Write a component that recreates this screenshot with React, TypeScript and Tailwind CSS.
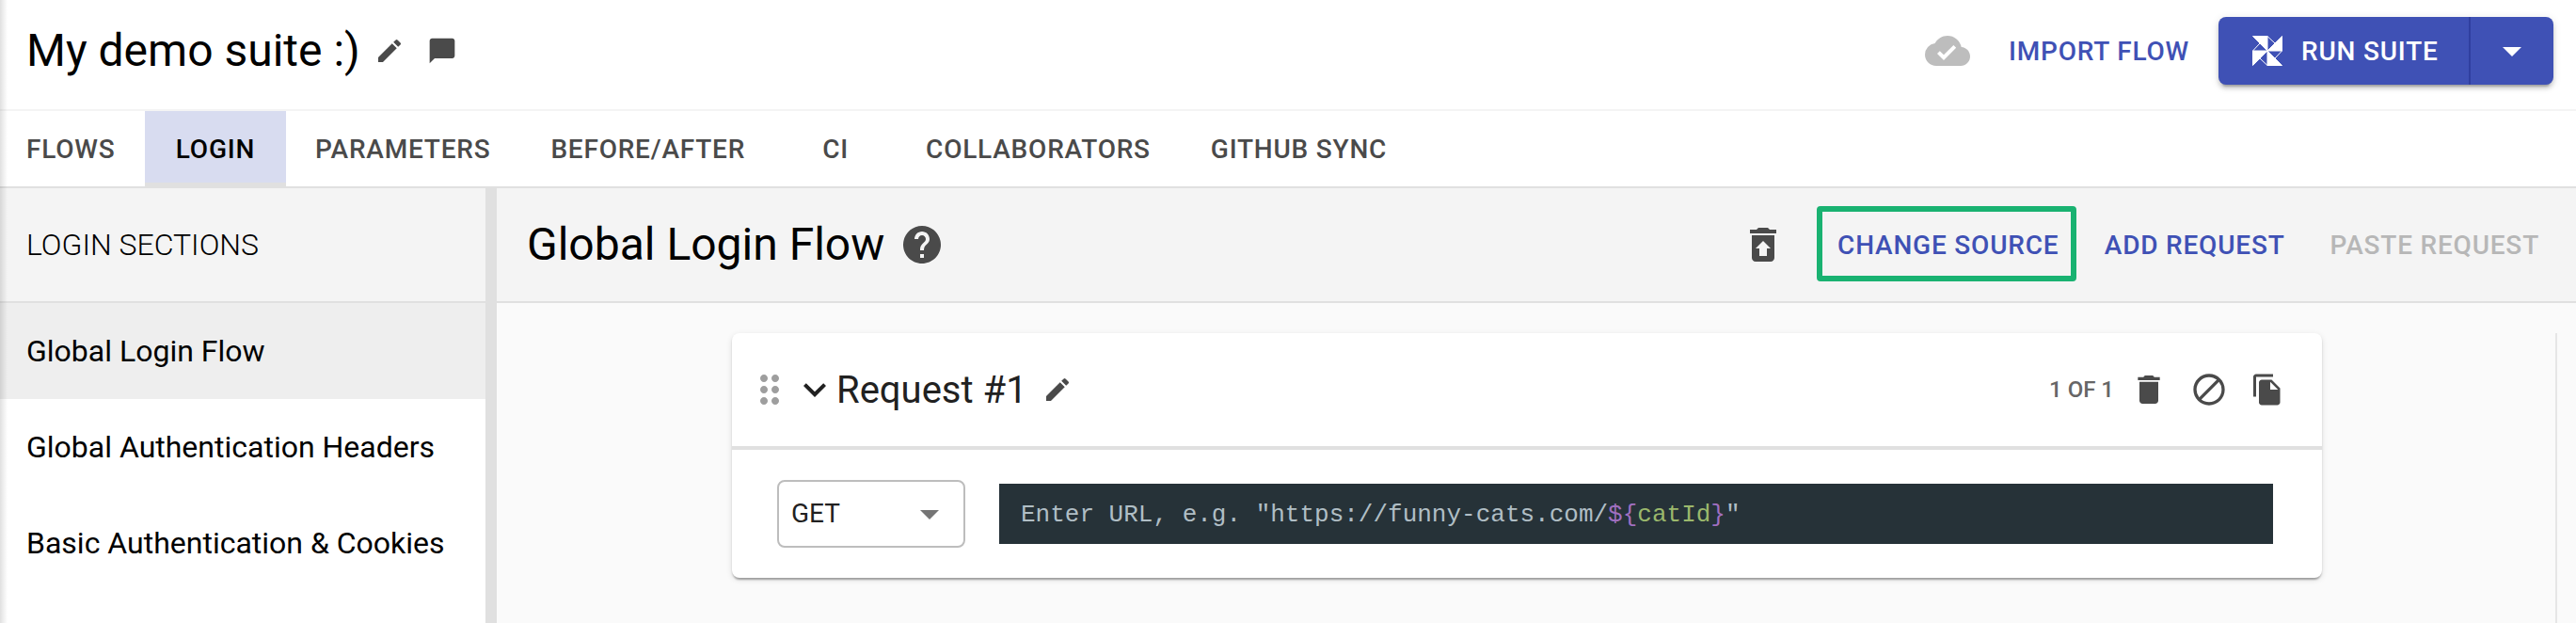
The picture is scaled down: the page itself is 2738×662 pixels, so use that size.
import type { ReactNode } from "react";
import {
  MdEdit, MdChatBubble, MdCloudDone, MdArrowDropDown, MdHelp, MdRestoreFromTrash,
  MdDragIndicator, MdExpandMore, MdDelete, MdBlock, MdFileCopy,
} from "react-icons/md";

const sections = ["Global Login Flow", "Global Authentication Headers", "Basic Authentication & Cookies"];

function Tab({ children, first, active }: { children: ReactNode; first?: boolean; active?: boolean }) {
  return (
    <div
      className={`flex h-[80px] items-center ${first ? "w-[154px] pl-[28px]" : "min-w-[128px] justify-center px-[32px]"} ${
        active ? "mr-[-1px] w-[150px] border-b-4 border-[#e0e0e0] bg-[#d8dcf0] pt-[6px] text-black" : "pt-[2px] text-[#4a4a4a]"
      }`}
    >
      {children}
    </div>
  );
}

function Pinwheel() {
  return (
    <svg width="32" height="32" viewBox="0 0 32 32" fill="#fff" stroke="#fff" strokeWidth="1">
      <path d="M0.5 0.5H16V16Z" />
      <path d="M31.5 0.5V16H16Z" />
      <path d="M31.5 31.5H16V16Z" />
      <path d="M0.5 31.5V16H16Z" />
      <path fill="none" d="M16 0.5L24 8M31.5 16L24 24M16 31.5L8 24M0.5 16L8 8" />
    </svg>
  );
}

export default function App() {
  return (
    <div className="relative flex h-[662px] w-[2738px] flex-col overflow-hidden bg-white font-['Roboto',sans-serif] text-black">
      <header className="flex h-[118px] items-center border-b-2 border-[#f4f4f4] pb-[8px] pl-[28px] pr-[24px]">
        <h1 className="text-[48px] leading-[56px]">My demo suite :)</h1>
        <MdEdit className="ml-[15px] size-[32px] text-[#4a4a4a]" />
        <MdChatBubble className="ml-[24px] size-[32px] text-[#4a4a4a]" />
        <div className="ml-auto flex items-center text-[28px] font-medium tracking-[0.8px]">
          <MdCloudDone className="mr-[41px] size-[48px] text-[#bdbdbd]" />
          <span className="mr-[31px] pt-[2px] text-[#3f51b5]">IMPORT FLOW</span>
          <div className="flex h-[72px] rounded-[8px] bg-[#3f51b5] text-white shadow-[0_6px_2px_-4px_rgba(0,0,0,0.2),0_4px_4px_0_rgba(0,0,0,0.14),0_2px_10px_0_rgba(0,0,0,0.12)]">
            <div className="flex w-[268px] items-center gap-[20px] border-r-2 border-[#303f9f] pl-[36px]">
              <Pinwheel />
              <span className="pt-[2px]">RUN SUITE</span>
            </div>
            <div className="flex w-[88px] items-center justify-center">
              <MdArrowDropDown className="size-[48px]" />
            </div>
          </div>
        </div>
      </header>

      <nav className="flex h-[82px] border-b-2 border-[#e0e0e0] text-[28px] font-medium tracking-[0.78px]">
        <Tab first>FLOWS</Tab>
        <Tab active>LOGIN</Tab>
        <Tab>PARAMETERS</Tab>
        <Tab>BEFORE/AFTER</Tab>
        <Tab>CI</Tab>
        <Tab>COLLABORATORS</Tab>
        <Tab>GITHUB SYNC</Tab>
      </nav>

      <div className="flex flex-1">
        <aside className="w-[528px] border-r-[12px] border-[#e0e0e0] text-[32px]">
          <div className="flex h-[122px] items-center border-b-2 border-[#e0e0e0] bg-[#f4f4f4] pl-[28px] font-light">
            LOGIN SECTIONS
          </div>
          {sections.map((s, i) => (
            <div key={s} className={`flex h-[102px] items-center pl-[28px] ${i === 0 ? "bg-[#eeeeee]" : ""}`}>
              {s}
            </div>
          ))}
        </aside>

        <main className="flex flex-1 flex-col bg-[#fafafa]">
          <div className="flex h-[122px] items-center border-b-2 border-[#e0e0e0] bg-[#f4f4f4] pl-[32px] pr-[40px]">
            <h2 className="text-[48px] leading-[56px]">Global Login Flow</h2>
            <MdHelp className="ml-[16px] size-[48px] text-[#4a4a4a]" />
            <div className="ml-auto flex items-center text-[28px] font-medium tracking-[0.8px] text-[#3f51b5]">
              <MdRestoreFromTrash className="mr-[33px] size-[48px] text-[#4a4a4a]" />
              <div className="mb-[2px] mr-[30px] flex h-[80px] w-[276px] items-center justify-center rounded-[4px] border-[6px] border-[#19b271] pl-[4px] pt-[3px]">
                CHANGE SOURCE
              </div>
              <span className="mr-[48px] pt-[2px]">ADD REQUEST</span>
              <span className="-mr-[1px] pt-[2px] text-[#b7b7b7]">PASTE REQUEST</span>
            </div>
          </div>

          <div className="flex flex-1 justify-between pl-[250px] pr-[20px] pt-[32px]">
            <section className="h-[260px] w-[1690px] rounded-[8px] bg-white text-[#212121] shadow-[0_4px_2px_-2px_rgba(0,0,0,0.2),0_2px_2px_0_rgba(0,0,0,0.14),0_2px_6px_0_rgba(0,0,0,0.12)]">
              <div className="flex h-[124px] items-center border-b-4 border-[#e0e0e0] pl-[16px] pr-[40px]">
                <MdDragIndicator className="size-[48px] text-[#9e9e9e]" />
                <MdExpandMore className="size-[48px]" />
                <span className="-ml-[1px] pt-[1px] text-[40px]">Request #1</span>
                <MdEdit className="ml-[16px] size-[32px] text-[#4a4a4a]" />
                <div className="ml-auto flex items-center text-[#4a4a4a]">
                  <span className="mr-[17px] text-[24px] font-medium text-[#666]">1 OF 1</span>
                  <MdDelete className="size-[40px]" />
                  <MdBlock className="ml-[24px] size-[40px]" />
                  <MdFileCopy className="ml-[24px] size-[36px]" />
                </div>
              </div>
              <div className="flex h-[136px] items-center pl-[48px]">
                <div className="flex h-[72px] w-[200px] items-center justify-between rounded-[8px] border-2 border-[#bdbdbd] pl-[13px] pr-[12px] text-[28px]">
                  GET
                  <MdArrowDropDown className="size-[48px] text-[#757575]" />
                </div>
                <div className="ml-[36px] flex h-[64px] w-[1354px] items-center whitespace-pre bg-[#263238] pl-[23px] pt-[3px] font-['Liberation_Mono',monospace] text-[26px] text-[#b0bec5]">
                  <span>Enter URL, e.g. "https://funny-cats.com/<span className="text-[#a06fc0]">{"${"}</span><span className="text-[#9bb86c]">catId</span><span className="text-[#a06fc0]">{"}"}</span>"</span>
                </div>
              </div>
            </section>
            <div className="w-[2px] bg-[#e6e6e6]" />
          </div>
        </main>
      </div>
      <div className="pointer-events-none absolute inset-y-0 left-0 w-[8px] bg-linear-to-r from-black/12 to-transparent" />
    </div>
  );
}
